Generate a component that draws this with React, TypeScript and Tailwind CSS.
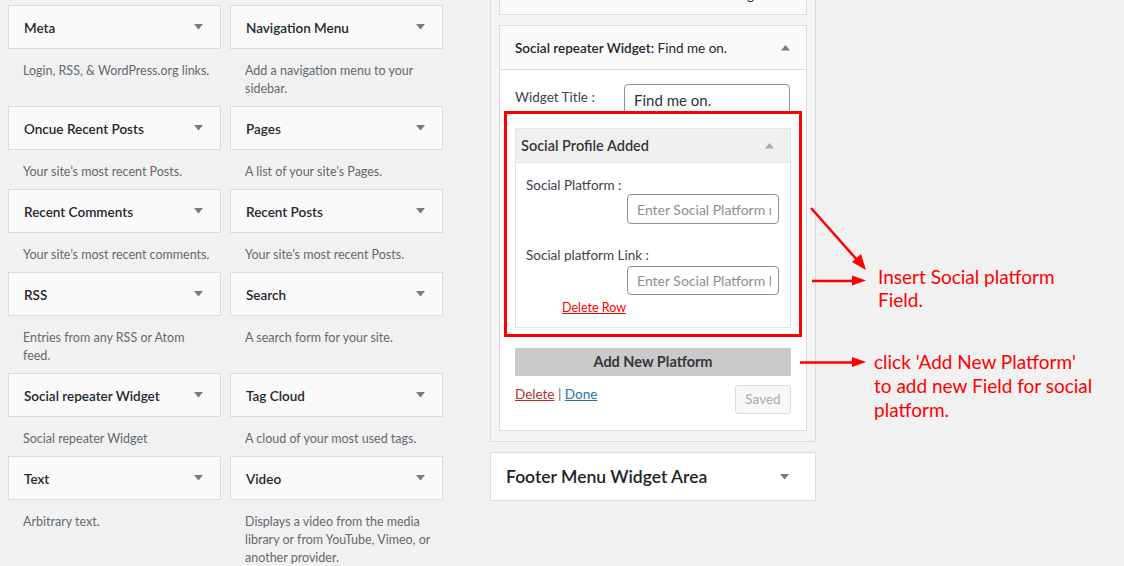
import React from "react";

const font = "font-['Lato','Open_Sans',sans-serif]";

function Down({ color = "#787c82" }: { color?: string }) {
  return (
    <svg width="9" height="6" viewBox="0 0 9 6" className="shrink-0">
      <polygon points="0,0 9,0 4.5,5.5" fill={color} />
    </svg>
  );
}
function Up({ color = "#787c82" }: { color?: string }) {
  return (
    <svg width="9" height="6" viewBox="0 0 9 6" className="shrink-0">
      <polygon points="0,5.5 9,5.5 4.5,0" fill={color} />
    </svg>
  );
}

const widgets: [string, string][] = [
  ["Meta", "Login, RSS, & WordPress.org links."],
  ["Navigation Menu", "Add a navigation menu to your sidebar."],
  ["Oncue Recent Posts", "Your site\u2019s most recent Posts."],
  ["Pages", "A list of your site\u2019s Pages."],
  ["Recent Comments", "Your site\u2019s most recent comments."],
  ["Recent Posts", "Your site\u2019s most recent Posts."],
  ["RSS", "Entries from any RSS or Atom feed."],
  ["Search", "A search form for your site."],
  ["Social repeater Widget", "Social repeater Widget"],
  ["Tag Cloud", "A cloud of your most used tags."],
  ["Text", "Arbitrary text."],
  ["Video", "Displays a video from the media library or from YouTube, Vimeo, or another provider."],
];

function WidgetCell({ title, desc }: { title: string; desc: string }) {
  return (
    <div className="flex flex-col">
      <div className="h-[44px] border border-[#dcdcde] bg-[#fafafa] flex items-center justify-between pl-[15px] pr-[17px]">
        <span className="text-[13.5px] font-semibold text-[#23282d] pt-[2px]">{title}</span>
        <Down />
      </div>
      <div className="pt-[13px] pb-[8px] pl-[15px] pr-[8px] text-[12.5px] leading-[18px] text-[#646970]">{desc}</div>
    </div>
  );
}

function Placeholder({ text, h }: { text: string; h: string }) {
  return (
    <div className={`self-end w-[152px] ${h} border border-[#8c8f94] rounded-[4px] flex items-center pl-[9px] pr-[7px]`}>
      <div className="overflow-hidden whitespace-nowrap text-[14px] text-[#8c8f94]">{text}</div>
    </div>
  );
}

export default function App() {
  return (
    <div className={`${font} relative w-[1124px] h-[566px] bg-[#f1f1f1] overflow-hidden flex items-start`}>
      {/* left available widgets */}
      <div className="ml-[8px] mt-[5px] grid grid-cols-[213px_213px] gap-x-[9px]">
        {widgets.map(([t, d]) => (
          <WidgetCell key={t} title={t} desc={d} />
        ))}
      </div>

      {/* right sidebar */}
      <div className="ml-[47px] flex flex-col w-[326px]">
        <div className="mt-[-40px] border border-[#dcdcde] bg-[#f5f5f5] px-[8px] pb-[10px] flex flex-col gap-[10px]">
          <div className="h-[54px] border border-[#dcdcde] bg-[#fafafa] flex items-end justify-end pr-[52px] pb-[12px]">
            <span className="text-[13px] text-[#23282d] leading-none">Setting</span>
          </div>

          {/* social repeater widget */}
          <div className="relative border border-[#dcdcde] bg-white">
            <div className="h-[44px] border-b border-[#dcdcde] bg-[#fafafa] flex items-center justify-between pl-[15px] pr-[16px]">
              <span className="text-[13.5px] text-[#23282d] pt-[2px]">
                <span className="font-semibold">Social repeater Widget:</span> Find me on.
              </span>
              <Up />
            </div>
            <div className="px-[15px] pt-[14px] pb-[16px]">
              <div className="flex items-start">
                <span className="w-[109px] mt-[4px] text-[13.5px] leading-[18px] text-[#3c434a]">Widget Title :</span>
                <div className="w-[166px] h-[30px] border border-[#8c8f94] rounded-[4px] bg-white flex items-center pl-[9px] pt-[2px] text-[15px] text-[#2c3338]">
                  Find me on.
                </div>
              </div>

              <div className="mt-[14px] border border-[#e2e4e7] bg-white">
                <div className="h-[34px] bg-[#f0f0f0] border-b border-[#e2e4e7] flex items-center justify-between pl-[5px] pr-[16px]">
                  <span className="text-[14.5px] font-semibold text-[#32373c]">Social Profile Added</span>
                  <Up color="#a7aaad" />
                </div>
                <div className="pl-[10px] pr-[11px] pt-[13px] pb-[11px] flex flex-col">
                  <span className="text-[13.5px] leading-[18px] text-[#3c434a]">Social Platform :</span>
                  <Placeholder text="Enter Social Platform name" h="h-[30px]" />
                  <span className="mt-[22px] text-[13.5px] leading-[18px] text-[#3c434a]">Social platform Link :</span>
                  <div className="mt-[2px] self-end">
                    <Placeholder text="Enter Social Platform link" h="h-[29px]" />
                  </div>
                  <span className="ml-[36px] mt-[5px] text-[12.5px] leading-[16px] text-[#ff0000] underline">Delete Row</span>
                </div>
              </div>

              <div className="mt-[20px] h-[28px] bg-[#cacaca] flex items-center justify-center text-[14.5px] font-bold text-[#32373c]">
                Add New Platform
              </div>

              <div className="mt-[9px] flex items-start justify-between">
                <span className="text-[13.5px] leading-[18px]">
                  <span className="text-[#b32d2e] underline">Delete</span>
                  <span className="text-[#646970]"> | </span>
                  <span className="text-[#2271b1] underline">Done</span>
                </span>
                <div className="w-[56px] h-[29px] border border-[#dcdcde] rounded-[3px] bg-[#f6f7f7] flex items-center justify-center text-[13.5px] text-[#a7aaad]">
                  Saved
                </div>
              </div>
            </div>

            {/* red annotation box */}
            <div className="absolute left-[4px] top-[85px] w-[298px] h-[226px] border-[3px] border-[#ff0000] pointer-events-none" />
          </div>
        </div>

        <div className="mt-[10px] h-[49px] border border-[#dcdcde] bg-white flex items-center justify-between pl-[15px] pr-[26px]">
          <span className="text-[17.5px] font-semibold text-[#1d2327] pt-[2px]">Footer Menu Widget Area</span>
          <Down />
        </div>
      </div>

      {/* annotation arrows */}
      <svg className="absolute left-0 top-0 pointer-events-none" width="1124" height="566">
        <line x1="811" y1="208" x2="858" y2="261" stroke="#ff0000" strokeWidth="2.5" />
        <polygon points="866,270 852,262 861,254" fill="#ff0000" />
        <line x1="812" y1="281" x2="853" y2="281" stroke="#ff0000" strokeWidth="2.5" />
        <polygon points="866,280.5 852,275.5 852,285.5" fill="#ff0000" />
        <line x1="800" y1="362.5" x2="853" y2="362.5" stroke="#ff0000" strokeWidth="2.5" />
        <polygon points="866,362 852,357 852,367" fill="#ff0000" />
      </svg>

      <div className="absolute left-[878px] top-[265px] font-['Lato',sans-serif] text-[19px] leading-[23px] text-[#ff0000]">
        Insert Social platform
        <br />
        Field.
      </div>
      <div className="absolute left-[874px] top-[350px] font-['Lato',sans-serif] text-[19px] leading-[24px] text-[#ff0000]">
        click 'Add New Platform'
        <br />
        to add new Field for social
        <br />
        platform.
      </div>
    </div>
  );
}
